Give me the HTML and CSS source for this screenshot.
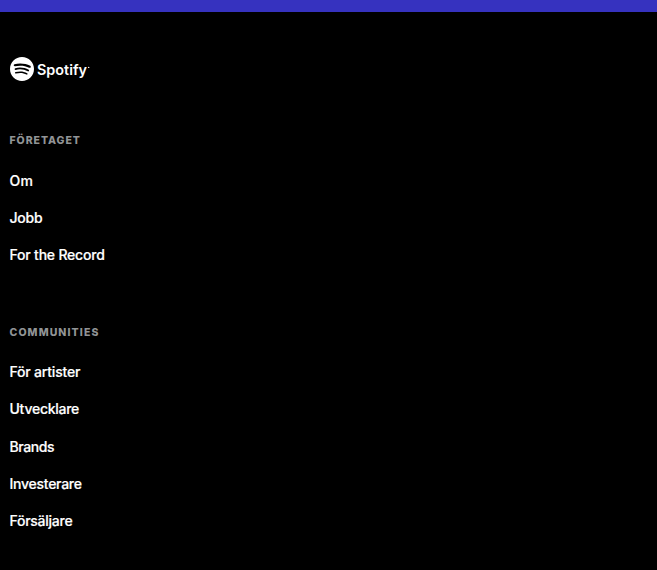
FILE: index.html
```html
<!DOCTYPE html>
<html lang="sv">
<head>
<meta charset="utf-8">
<title>Spotify</title>
<link rel="stylesheet" href="styles.css">
</head>
<body>
<div class="banner"></div>
<footer class="footer">
  <a class="logo" aria-label="Spotify">
    <svg class="mark" viewBox="0 0 24 24"><path d="M12 0C5.4 0 0 5.4 0 12s5.4 12 12 12 12-5.4 12-12S18.66 0 12 0zm5.521 17.34c-.24.359-.66.48-1.021.24-2.82-1.74-6.36-2.101-10.561-1.141-.418.122-.779-.179-.899-.539-.12-.421.18-.78.54-.9 4.56-1.021 8.52-.6 11.64 1.32.42.18.479.659.301 1.02zm1.44-3.3c-.301.42-.841.6-1.262.3-3.239-1.98-8.159-2.58-11.939-1.38-.479.12-1.02-.12-1.14-.6-.12-.48.12-1.021.6-1.141C9.6 9.9 15 10.561 18.72 12.84c.361.181.54.78.241 1.2zm.12-3.36C15.24 8.4 8.82 8.16 5.16 9.301c-.6.179-1.2-.181-1.38-.721-.18-.601.18-1.2.72-1.381 4.26-1.26 11.28-1.02 15.721 1.621.539.3.719 1.02.419 1.56-.299.421-1.02.599-1.559.3z"/></svg>
    <svg class="wordmark" viewBox="0 0 54 24"><text x="0" y="17.6" textLength="50" lengthAdjust="spacingAndGlyphs">Spotify</text><circle cx="51.7" cy="10.4" r=".7"/></svg>
  </a>
  <section class="group">
    <h2 class="heading">Företaget</h2>
    <ul class="links">
      <li><a class="om">Om</a></li>
      <li><a>Jobb</a></li>
      <li><a class="record">For the Record</a></li>
    </ul>
  </section>
  <section class="group communities">
    <h2 class="heading">Communities</h2>
    <ul class="links">
      <li><a class="artists">För artister</a></li>
      <li><a>Utvecklare</a></li>
      <li><a class="brands">Brands</a></li>
      <li><a>Investerare</a></li>
      <li><a>Försäljare</a></li>
    </ul>
  </section>
</footer>
</body>
</html>
```
FILE: styles.css
```css
body {
  margin: 0;
  height: 570px;
  overflow: hidden;
  background: #000;
  color: #fff;
  font-family: Inter, "Liberation Sans", sans-serif;
}
.banner { height: 12px; background: #3632bf; }
.footer { padding: 45px 9.5px 0; }
.logo { display: flex; gap: 3.5px; height: 24px; }
.mark { width: 24px; height: 24px; fill: #fff; }
.wordmark { width: 54px; height: 24px; fill: #fff; }
.wordmark text {
  font-family: Inter, sans-serif;
  font-size: 14.5px;
  font-weight: 600;
}
.group { padding-top: 52px; }
.heading {
  margin: 0 0 12.5px;
  font-size: 10.5px;
  line-height: 16px;
  font-weight: 800;
  letter-spacing: .95px;
  text-transform: uppercase;
  color: #919496;
}
.links { margin: 0; padding: 0; list-style: none; }
.links li { height: 37.25px; line-height: 37.25px; }
.links a {
  font-size: 14px;
  font-weight: 500;
  letter-spacing: -.26px;
  white-space: nowrap;
  -webkit-text-stroke: .2px #fff;
}
.links .om { letter-spacing: .3px; }
.links .record { letter-spacing: -.2px; }
.links .artists { letter-spacing: -.2px; }
.links .brands { letter-spacing: -.4px; }
.communities .heading { margin-bottom: 11.75px; letter-spacing: 1.1px; }
```
